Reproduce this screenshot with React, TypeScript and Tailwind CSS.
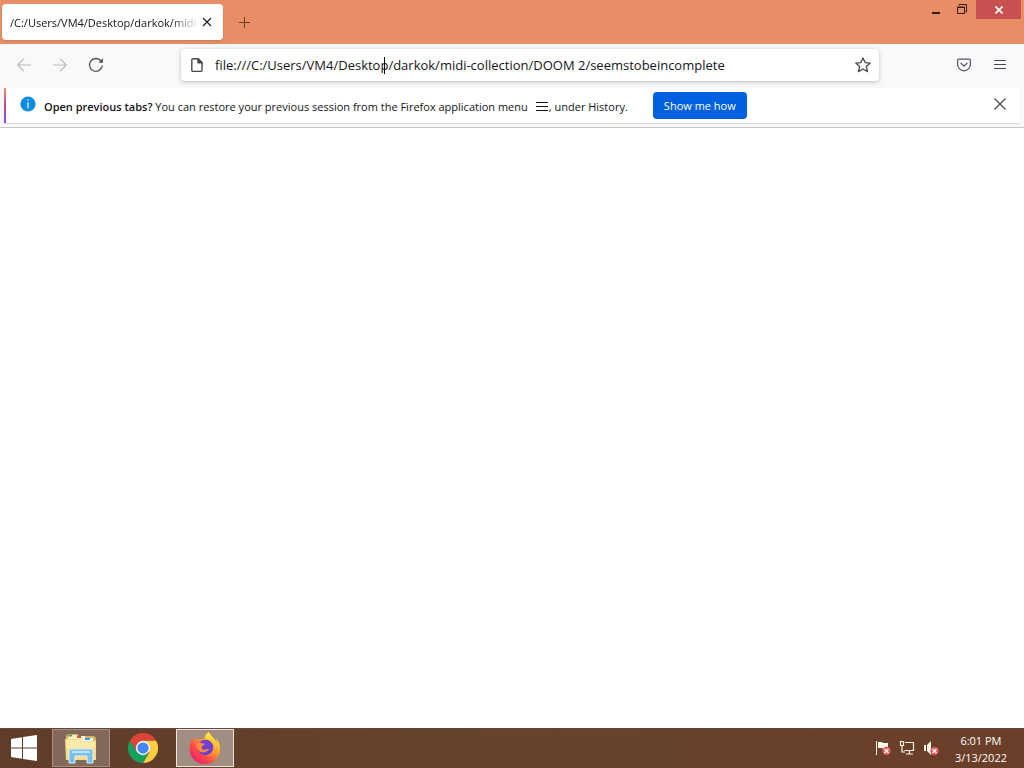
import React from "react";

function TabBar() {
  return (
    <header className="flex h-11 items-start bg-[#e78e66]">
      <div className="flex h-11 items-center pl-0.5">
        <div className="flex h-9 w-[221px] items-center rounded bg-white pl-2 shadow-sm">
          <span className="w-[189px] overflow-hidden whitespace-nowrap pt-0.5 text-[11px] text-[#15141a] [mask-image:linear-gradient(to_right,black_160px,transparent_190px)]">
            /C:/Users/VM4/Desktop/darkok/midi
          </span>
          <button type="button" aria-label="Close tab" className="flex h-6 w-4 items-center justify-center">
            <svg width="10" height="10" viewBox="0 0 10 10" stroke="#222" strokeWidth="1.2" fill="none">
              <path d="M1 1l8 8M9 1L1 9" />
            </svg>
          </button>
        </div>
        <button type="button" aria-label="New tab" className="ml-2 flex size-7 items-center justify-center">
          <svg width="12" height="12" viewBox="0 0 12 12" stroke="#6b3f2b" fill="none">
            <path d="M5.500 1v11M0 6.500h11" />
          </svg>
        </button>
      </div>
      <div className="ml-auto flex h-[19px] pr-[3px]">
        <button type="button" aria-label="Minimize" className="flex w-[26px] items-center justify-center">
          <svg width="8" height="10" viewBox="0 0 8 10">
            <path d="M0 7h8v2H0z" fill="#3a1b0c" />
          </svg>
        </button>
        <button type="button" aria-label="Restore" className="flex w-[27px] items-center justify-center">
          <svg width="11" height="11" viewBox="0 0 11 11" fill="none" stroke="#3a1b0c">
            <path d="M2 1.500V.5h7.500V8H8.500M.5 3h7v6.500h-7zM0 3.500h8" />
          </svg>
        </button>
        <button type="button" aria-label="Close window" className="flex w-[45px] items-center justify-center bg-[#c75050]">
          <svg width="8" height="8" viewBox="0 0 8 8" stroke="#fff" strokeWidth="1.6">
            <path d="M.5.5l7 7M7.500.5l-7 7" />
          </svg>
        </button>
      </div>
    </header>
  );
}

function Toolbar() {
  return (
    <nav className="flex h-11 items-center bg-[#f9f9fb] pb-0.5">
      <div className="flex w-[181px] shrink-0 items-center gap-2 pl-2.5">
        <button type="button" aria-label="Back" className="flex size-7 items-center justify-center">
          <svg width="14" height="14" viewBox="0 0 14 14" stroke="#bcbcc0" strokeWidth="1.2" fill="none" strokeLinecap="round" strokeLinejoin="round">
            <path d="M13.500 7H.8M6.500 1.200L.8 7l5.700 5.800" />
          </svg>
        </button>
        <button type="button" aria-label="Forward" className="flex size-7 items-center justify-center">
          <svg width="14" height="14" viewBox="0 0 14 14" stroke="#bcbcc0" strokeWidth="1.2" fill="none" strokeLinecap="round" strokeLinejoin="round">
            <path d="M.5 7h12.700M7.500 1.200L13.200 7l-5.700 5.800" />
          </svg>
        </button>
        <button type="button" aria-label="Reload" className="flex size-7 items-center justify-center">
          <svg width="16" height="16" viewBox="0 0 16 16" stroke="#55555b" strokeWidth="1.3" fill="none" strokeLinecap="round">
            <path d="M14.200 9.200A6.400 6.400 0 1 1 12.600 3.500l1.600 1.600" />
            <path d="M14.900 1.200v4.600h-4.600z" fill="#55555b" stroke="none" />
          </svg>
        </button>
      </div>
      <div className="relative flex h-8 min-w-0 flex-1 items-center rounded bg-white pr-2 pl-2 shadow-[0_1px_4px_rgba(0,0,0,0.25)]">
        <svg width="16" height="16" viewBox="0 0 16 16" fill="none" stroke="#48484e" strokeWidth="1.4" strokeLinejoin="round" className="shrink-0">
          <path d="M4 1.700h5.200L13 5.500v7.700c0 .7-.5 1.200-1.200 1.200H4c-.7 0-1.200-.5-1.200-1.200V2.900c0-.7.5-1.200 1.200-1.200z" />
          <path d="M9 1.700v4h4z" fill="#48484e" />
        </svg>
        <input
          type="text"
          aria-label="Address"
          defaultValue="file:///C:/Users/VM4/Desktop/darkok/midi-collection/DOOM 2/seemstobeincomplete"
          className="ml-2.5 h-7 min-w-0 flex-1 bg-transparent text-[13px] text-[#15141a] outline-none"
        />
        <span className="absolute top-2 left-[203px] h-[17px] w-px bg-black" />
        <button type="button" aria-label="Bookmark this page" className="flex w-4 shrink-0 items-center justify-center">
          <svg width="16" height="16" viewBox="0 0 16 16" fill="none" stroke="#48484e" strokeWidth="1.3" strokeLinejoin="round">
            <path d="M8 .9l2.100 4.700 5.100.5-3.900 3.400 1.200 5.100L8 12l-4.500 2.600 1.200-5.100L.8 6.100l5.100-.5z" />
          </svg>
        </button>
      </div>
      <div className="flex w-[145px] shrink-0 items-center justify-end gap-2 pr-2.5">
        <button type="button" aria-label="Save to Pocket" className="flex size-7 items-center justify-center">
          <svg width="14" height="14" viewBox="0 0 14 14" fill="none" stroke="#55555b" strokeWidth="1.2" strokeLinecap="round" strokeLinejoin="round">
            <path d="M1.800 1.200h10.400c.7 0 1.200.5 1.200 1.200v4A6.400 6.400 0 0 1 .6 6.400v-4c0-.7.5-1.200 1.200-1.200z" />
            <path d="M4 5.200l3 2.900 3-2.900" />
          </svg>
        </button>
        <button type="button" aria-label="Open application menu" className="flex size-7 items-center justify-center">
          <svg width="12" height="12" viewBox="0 0 12 12" stroke="#48484e">
            <path d="M0 1.500h12M0 5.500h12M0 9.500h12" />
          </svg>
        </button>
      </div>
    </nav>
  );
}

function Notification() {
  return (
    <section className="border-b border-[#c6c6c9] bg-[#f9f9fb] px-1 pb-1">
      <div className="flex h-[35px] items-center bg-white pr-3.5 shadow-[0_1px_1px_rgba(0,0,0,0.12)]">
        <div className="h-full w-0.5 bg-linear-to-b from-[#f38a62] via-[#c0469b] to-[#8b4ae0]" />
        <svg width="16" height="16" viewBox="0 0 16 16" className="mb-1 ml-3.5 shrink-0">
          <circle cx="8" cy="8" r="7.6" fill="#0a8de0" />
          <path d="M7.400 3.400h1.200v1.400H7.400zM7.400 6.300h1.200v6H7.400z" fill="#fff" />
        </svg>
        <p className="ml-2 flex items-center whitespace-nowrap pt-1 text-[11px] text-[#15141a]">
          <span>
            <span className="font-semibold">Open previous tabs?</span> You can restore your previous session from the Firefox application menu
          </span>
          <svg width="12" height="12" viewBox="0 0 12 12" stroke="#15141a" className="mr-px mb-0.5 ml-2">
            <path d="M0 1.500h12M0 5.500h12M0 9.500h12" />
          </svg>
          <span>, under History.</span>
        </p>
        <button type="button" className="ml-[25px] h-[27px] w-[94px] shrink-0 whitespace-nowrap rounded bg-[#0061e0] pt-px text-[11px] text-white">
          Show me how
        </button>
        <button type="button" aria-label="Dismiss" className="mb-1 ml-auto flex size-3 items-center justify-center">
          <svg width="12" height="12" viewBox="0 0 12 12" stroke="#48484e" strokeWidth="1.2">
            <path d="M.5.5l11 11M11.500.5l-11 11" />
          </svg>
        </button>
      </div>
    </section>
  );
}

function ExplorerIcon() {
  return (
    <svg width="34" height="32" viewBox="0 0 34 32">
      <path d="M2 4l2-2h9l2 2h15l2 2v22H2z" fill="#d9b45a" />
      <path d="M4 3h9v4H4z" fill="#f7edc0" />
      <path d="M4 2.500h4v2H4z" fill="#58a653" />
      <path d="M12 4h9v5h-9z" fill="#fff6da" />
      <path d="M13 4h4v2h-4z" fill="#d65340" />
      <path d="M20 6h9v4h-9z" fill="#e8f6ff" />
      <path d="M21 6h5v2h-5z" fill="#3f9fd0" />
      <path d="M1 7h15l2 2h14v19H2z" fill="#f5dc85" />
      <path d="M2 8h13l2 2h14v6H2z" fill="#fbeaa8" />
      <path d="M5 31V19q0-2 2-2h20q2 0 2 2v12h-6v-7H11v7z" fill="#7cc0ea" stroke="#d9f1fc" />
      <path d="M8 20h18" stroke="#b9e4fa" strokeWidth="2" />
    </svg>
  );
}

function ChromeIcon() {
  return (
    <svg width="30" height="30" viewBox="0 0 48 48">
      <path d="M24 12h20.800A24 24 0 0 1 24 48l10.400-18z" fill="#ffcd40" />
      <path d="M3.200 12l10.400 18L24 34h8L24 48A24 24 0 0 1 3.200 12z" fill="#16a05d" />
      <path d="M24 12h20.800A24 24 0 0 0 3.200 12l10.400 18z" fill="#db4437" />
      <circle cx="24" cy="24" r="11.500" fill="#f3f3f3" />
      <circle cx="24" cy="24" r="9" fill="#4387f5" />
    </svg>
  );
}

function FirefoxIcon() {
  return (
    <svg width="32" height="32" viewBox="0 0 32 32">
      <defs>
        <linearGradient id="flame" x1="1" y1="0" x2="0.15" y2="1">
          <stop offset="0.1" stopColor="#fff044" />
          <stop offset="0.4" stopColor="#ffa52b" />
          <stop offset="0.68" stopColor="#ff4c45" />
          <stop offset="1" stopColor="#e21778" />
        </linearGradient>
        <linearGradient id="tail" x1="0" y1="0" x2="0" y2="1">
          <stop offset="0" stopColor="#fff044" />
          <stop offset="0.6" stopColor="#ffb82b" />
          <stop offset="1" stopColor="#ff8036" />
        </linearGradient>
      </defs>
      <path d="M29.800 10.800c-.7-1.700-2.200-3.600-3.300-4.200 1 1.900 1.500 3.800 1.700 5.200C26.300 7.200 23.100 5.300 20.500 1.200l-.8-1.200c-2.700 1.600-4 4.500-4.200 6.600-1.300.1-2.500.5-3.600 1.100-1.900-.2-3.300-.8-4.600-2.300-.8.8-1.100 2.200-1 3.700L4 8.500 4.200 5C2.500 7 1.200 10.500 1 14.500c-.7 1.400-.7 4 .1 6.700a15.200 15.200 0 0 0 29.800-4.300c0-2.300-.3-4.300-1.100-6.100z" fill="url(#flame)" />
      <circle cx="16.500" cy="15.500" r="7.800" fill="#6f3fd0" />
      <path d="M7.500 11.500c3-2 6 .3 8.300-.1.200 1.600-2.700 2-3.200 3.800-.5 1.600 1.800 3.200 4.300 2.200 1.500-.6 2.700-.7 3.800.2-1 .1-1.800 1.100-3.300 2-4.500 2.600-10.500-1.300-9.900-8.100z" fill="#ff8a3c" />
      <path d="M19.800 0c-2.700 1.600-4 4.500-4.200 6.600 5.200-.3 9.200 4.300 9.200 8.800 0 4.300-3.500 7.600-7.800 7.600 5.500 2.800 12-1.200 12-8 0-5.200-5.800-9.100-8.500-13.800z" fill="url(#tail)" />
    </svg>
  );
}

function ErrorBadge() {
  return (
    <g>
      <circle cx="11.500" cy="11" r="4.200" fill="#e0565a" />
      <path d="M9.500 9l4 4M13.500 9l-4 4" stroke="#fff" strokeWidth="1.400" />
    </g>
  );
}

function Taskbar() {
  return (
    <footer className="flex h-10 items-center border-t border-[#61483a] bg-linear-to-r from-[#603c2a] via-[#65442b] to-[#6b3e29] pb-px text-white">
      <button type="button" aria-label="Start" className="flex h-full w-[52px] items-center justify-start pl-[11px]">
        <svg width="26" height="26" viewBox="0 0 26 26" fill="#fff">
          <path d="M0 4l11-1.700v10.200H0zM12 2.100L26 0v12.500H12zM0 13.500h11v10.200L0 22zM12 13.500h14V26l-14-2.100z" />
        </svg>
      </button>
      <button type="button" aria-label="File Explorer" className="flex h-[38px] w-[58px] items-center justify-center border border-[#a68e81] bg-[#82695b]">
        <ExplorerIcon />
      </button>
      <button type="button" aria-label="Google Chrome" className="ml-1 flex h-[38px] w-[58px] items-center justify-center">
        <ChromeIcon />
      </button>
      <button type="button" aria-label="Firefox" className="ml-1 flex h-[38px] w-[58px] items-center justify-center border border-[#eee4d8] bg-[#a18e83]">
        <FirefoxIcon />
      </button>
      <div className="ml-auto flex items-center gap-2 pr-[17px]">
        <svg width="16" height="16" viewBox="0 0 16 16">
          <path d="M1.500 1v14" stroke="#fff6e6" />
          <path d="M3 2h4l1 1h5v6H8L7 8H3z" fill="#fff6e6" />
          <ErrorBadge />
        </svg>
        <svg width="16" height="16" viewBox="0 0 16 16" fill="none" stroke="#fff6e6" strokeWidth="1.200">
          <path d="M6 2.500h8.500v8H5.500M7 14h7M10.500 10.500V14M1.500 1.500h3v4h-3zM3 5.500V12h3" />
        </svg>
        <svg width="16" height="16" viewBox="0 0 16 16">
          <path d="M1 5h2v6H1zM4 5l4-4v14l-4-4z" fill="#fff6e6" />
          <ErrorBadge />
        </svg>
        <div className="ml-2 pt-px text-center text-[11px] leading-[17px] whitespace-nowrap">
          <div>6:01 PM</div>
          <div>3/13/2022</div>
        </div>
      </div>
    </footer>
  );
}

export default function App() {
  return (
    <div className="flex min-h-screen flex-col bg-white font-['Open_Sans','Noto_Sans',sans-serif]">
      <TabBar />
      <Toolbar />
      <Notification />
      <main className="flex-1 bg-white" />
      <Taskbar />
    </div>
  );
}
